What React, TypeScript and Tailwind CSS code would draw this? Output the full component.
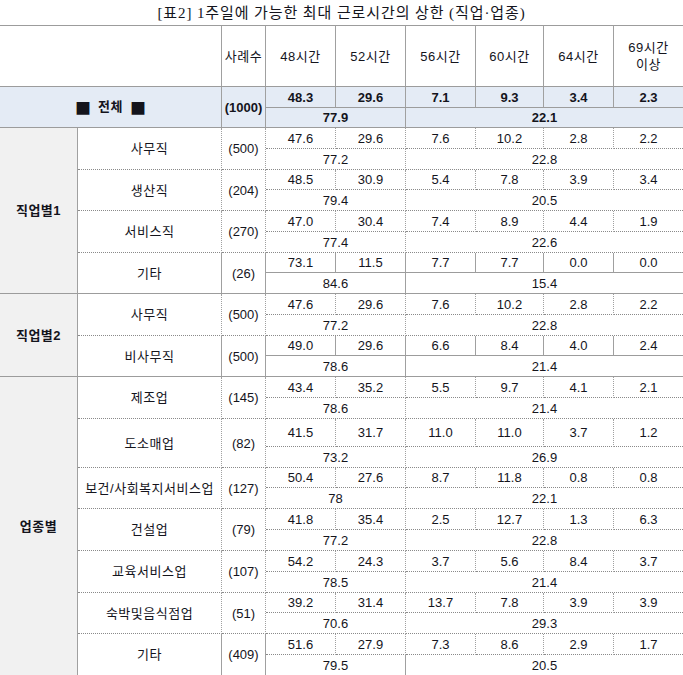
type Item = {
  name: string;
  n: string;
  vals: string[];
  sums: [string, string];
  h: number;
};

type Group = { label: string; items: Item[]; lastSolid: boolean };

const groups: Group[] = [
  {
    label: "직업별1",
    lastSolid: true,
    items: [
      { name: "사무직", n: "(500)", vals: ["47.6", "29.6", "7.6", "10.2", "2.8", "2.2"], sums: ["77.2", "22.8"], h: 42 },
      { name: "생산직", n: "(204)", vals: ["48.5", "30.9", "5.4", "7.8", "3.9", "3.4"], sums: ["79.4", "20.5"], h: 41 },
      { name: "서비스직", n: "(270)", vals: ["47.0", "30.4", "7.4", "8.9", "4.4", "1.9"], sums: ["77.4", "22.6"], h: 42 },
      { name: "기타", n: "(26)", vals: ["73.1", "11.5", "7.7", "7.7", "0.0", "0.0"], sums: ["84.6", "15.4"], h: 41 },
    ],
  },
  {
    label: "직업별2",
    lastSolid: true,
    items: [
      { name: "사무직", n: "(500)", vals: ["47.6", "29.6", "7.6", "10.2", "2.8", "2.2"], sums: ["77.2", "22.8"], h: 42 },
      { name: "비사무직", n: "(500)", vals: ["49.0", "29.6", "6.6", "8.4", "4.0", "2.4"], sums: ["78.6", "21.4"], h: 41 },
    ],
  },
  {
    label: "업종별",
    lastSolid: false,
    items: [
      { name: "제조업", n: "(145)", vals: ["43.4", "35.2", "5.5", "9.7", "4.1", "2.1"], sums: ["78.6", "21.4"], h: 42 },
      { name: "도소매업", n: "(82)", vals: ["41.5", "31.7", "11.0", "11.0", "3.7", "1.2"], sums: ["73.2", "26.9"], h: 49 },
      { name: "보건/사회복지서비스업", n: "(127)", vals: ["50.4", "27.6", "8.7", "11.8", "0.8", "0.8"], sums: ["78", "22.1"], h: 41 },
      { name: "건설업", n: "(79)", vals: ["41.8", "35.4", "2.5", "12.7", "1.3", "6.3"], sums: ["77.2", "22.8"], h: 42 },
      { name: "교육서비스업", n: "(107)", vals: ["54.2", "24.3", "3.7", "5.6", "8.4", "3.7"], sums: ["78.5", "21.4"], h: 42 },
      { name: "숙박및음식점업", n: "(51)", vals: ["39.2", "31.4", "13.7", "7.8", "3.9", "3.9"], sums: ["70.6", "29.3"], h: 41 },
      { name: "기타", n: "(409)", vals: ["51.6", "27.9", "7.3", "8.6", "2.9", "1.7"], sums: ["79.5", "20.5"], h: 42 },
    ],
  },
];

const hours = ["48시간", "52시간", "56시간", "60시간", "64시간"];
const widths = [78, 144, 44, 70, 70, 70, 68, 70, 69];

// solid grid lines vs the dotted ones inside a group
const solidB = "border-b border-solid border-b-[#9c9c9c]";
const dotB = "border-b border-dotted border-b-[#8a8a8a]";
const rightB = "border-r border-r-[#a0a0a0]";
const topB = "border-t border-t-[#9c9c9c]";
const ko = "tracking-[0.5px]";

export default function App() {
  return (
    <div className="w-[683px] bg-white text-[#14141c] font-['Liberation_Sans','Noto_Sans_CJK_KR',sans-serif]">
      <div className="h-[25px] flex items-center justify-center pt-[1px] text-[15px] tracking-[0.9px] font-['Liberation_Serif','Noto_Sans_CJK_KR',serif]">
        [표2] 1주일에 가능한 최대 근로시간의 상한 (직업·업종)
      </div>
      <table className="table-fixed border-separate border-spacing-0 w-[683px] text-[13px] leading-none text-center">
        <colgroup>
          {widths.map((w, i) => (
            <col key={i} style={{ width: w }} />
          ))}
        </colgroup>
        <tbody>
          <tr>
            <td colSpan={2} className={`h-[62px] ${topB} ${solidB} ${rightB}`}></td>
            <td className={`${topB} ${solidB} ${rightB} ${ko}`}>사례수</td>
            {hours.map((h) => (
              <td key={h} className={`${topB} ${solidB} ${rightB} ${ko}`}>
                {h}
              </td>
            ))}
            <td className={`${topB} ${solidB} leading-[17px] ${ko}`}>
              69시간
              <br />
              이상
            </td>
          </tr>

          <tr className="bg-[#e4ebf5] font-bold">
            <td colSpan={2} rowSpan={2} className={`${solidB} ${rightB}`}>
              <span className="inline-flex items-center justify-center gap-[7px]">
                <span className="font-['Noto_Sans_CJK_KR'] font-normal text-[16px] leading-none">■</span>
                <span className={ko}>전체</span>
                <span className="font-['Noto_Sans_CJK_KR'] font-normal text-[16px] leading-none">■</span>
              </span>
            </td>
            <td rowSpan={2} className={`${solidB} ${rightB}`}>(1000)</td>
            {["48.3", "29.6", "7.1", "9.3", "3.4", "2.3"].map((v, i) => (
              <td key={i} className={`h-[21px] ${solidB} ${i < 5 ? rightB : ""}`}>
                {v}
              </td>
            ))}
          </tr>
          <tr className="bg-[#e4ebf5] font-bold">
            <td colSpan={2} className={`h-[20px] ${solidB} ${rightB}`}>77.9</td>
            <td colSpan={4} className={solidB}>22.1</td>
          </tr>

          {groups.map((g) =>
            g.items.map((it, idx) => {
              const last = idx === g.items.length - 1;
              const inner = last && g.lastSolid ? solidB : dotB;
              const bottom = last ? solidB : dotB;
              return [
                <tr key={g.label + idx + "a"}>
                  {idx === 0 && (
                    <td
                      rowSpan={g.items.length * 2}
                      className={`bg-[#f1f1f1] font-bold ${ko} ${solidB} ${rightB}`}
                    >
                      {g.label}
                    </td>
                  )}
                  <td rowSpan={2} className={`${bottom} ${rightB} ${ko}`}>
                    {it.name}
                  </td>
                  <td rowSpan={2} className={`${bottom} ${rightB}`}>
                    {it.n}
                  </td>
                  {it.vals.map((v, i) => (
                    <td
                      key={i}
                      style={{ height: it.h - 21 }}
                      className={`${inner} ${i < 5 ? rightB : ""}`}
                    >
                      {v}
                    </td>
                  ))}
                </tr>,
                <tr key={g.label + idx + "b"}>
                  <td colSpan={2} className={`h-[21px] ${bottom} ${rightB}`}>
                    {it.sums[0]}
                  </td>
                  <td colSpan={4} className={bottom}>
                    {it.sums[1]}
                  </td>
                </tr>,
              ];
            })
          )}
        </tbody>
      </table>
    </div>
  );
}
